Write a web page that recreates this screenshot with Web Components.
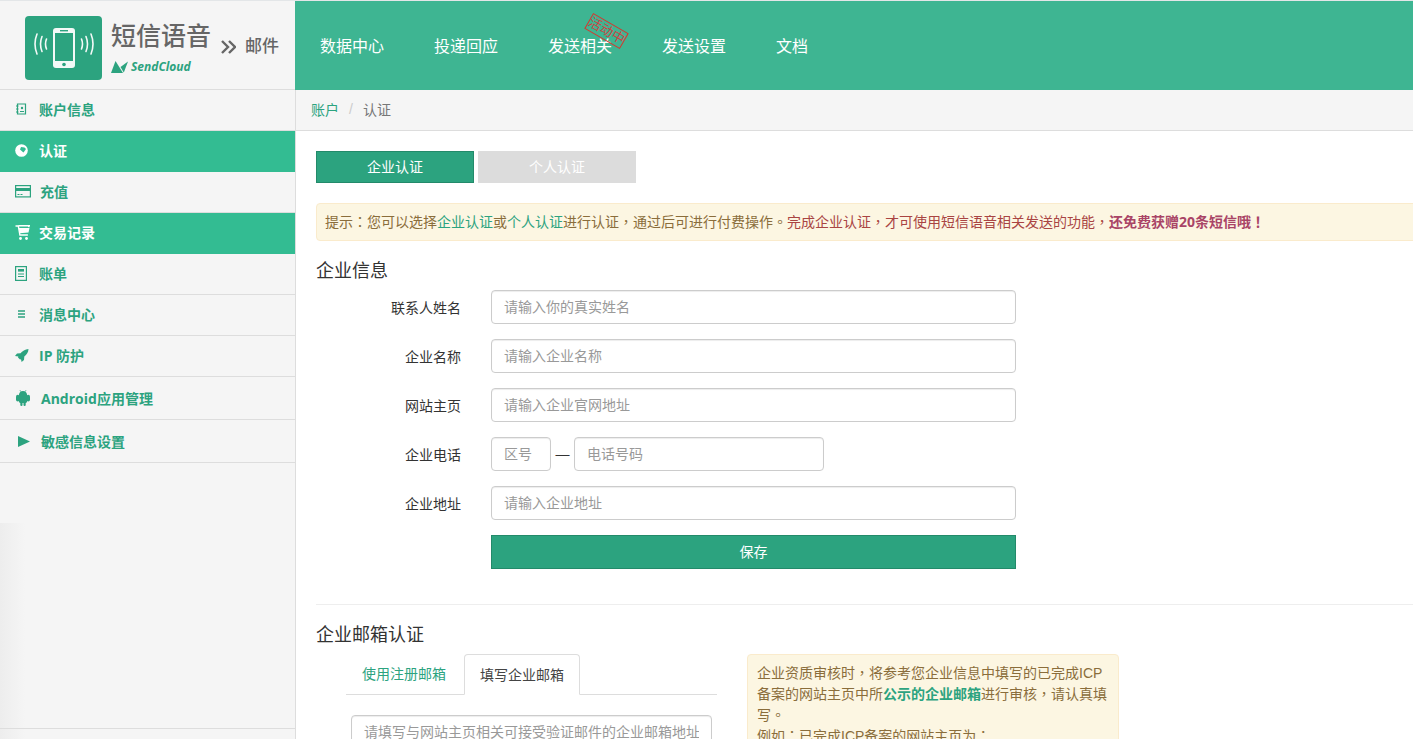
<!DOCTYPE html>
<html lang="zh">
<head>
<meta charset="utf-8">
<title>认证</title>
<style>
    html, body { margin: 0; padding: 0; height: 739px; overflow: hidden; background: #fff; }
    body {
        font-family: "Liberation Sans", "Noto Sans CJK SC", sans-serif;
        font-size: 14px;
        color: #333;
    }
    #page { display: flex; flex-direction: column; width: 1413px; height: 739px; overflow: hidden; }
    #body-row { display: flex; flex: 1; min-height: 0; }
</style>
</head>
<body>
<div id="page">
    <app-header></app-header>
    <div id="body-row">
        <side-nav>
            <nav-item icon="book" label="账户信息"></nav-item>
            <nav-item icon="globe" label="认证" active></nav-item>
            <nav-item icon="card" label="充值" nudge="1"></nav-item>
            <nav-item icon="cart" label="交易记录" active></nav-item>
            <nav-item icon="bill" label="账单"></nav-item>
            <nav-item icon="list" label="消息中心"></nav-item>
            <nav-item icon="rocket" label="IP 防护"></nav-item>
            <nav-item icon="android" label="Android应用管理" nudge="2" tall></nav-item>
            <nav-item icon="play" label="敏感信息设置" nudge="2" tall></nav-item>
        </side-nav>
        <main-panel>
            <bread-crumb></bread-crumb>
            <auth-content></auth-content>
        </main-panel>
    </div>
</div>

<script>
const ICONS = {
    book: '<svg width="12" height="12" viewBox="0 0 12 12"><path d="M2.500 1h8v10h-8z" fill="none" stroke="currentColor" stroke-width="1.200"/><path d="M1 3h2.500M1 6h2.500M1 9h2.500" stroke="currentColor"/><circle cx="7" cy="5" r="1.200" fill="currentColor"/><path d="M5 8.500h4" stroke="currentColor"/></svg>',
    globe: '<svg width="13" height="13" viewBox="0 0 13 13"><circle cx="6.500" cy="6.500" r="6.300" fill="currentColor"/><path d="M6 3l3.500 .5 1.500 1.500-2.500 3.500-1-.8-2.500-2.200z" fill="var(--icon-cut)"/></svg>',
    card: '<svg width="16" height="13" viewBox="0 0 16 13"><rect x=".6" y=".6" width="14.800" height="11.300" fill="none" stroke="currentColor" stroke-width="1.200"/><rect x="1" y="3" width="14" height="3" fill="currentColor"/><path d="M2.500 9.500h2M5.500 9.500h2" stroke="currentColor"/></svg>',
    cart: '<svg width="15" height="15" viewBox="0 0 15 15"><path d="M3.500 .8h10.800l-.8 1.400" fill="none" stroke="currentColor" stroke-width="1.400"/><path d="M.5 1h2.800l1.600 9h8" fill="none" stroke="currentColor" stroke-width="1.400"/><path d="M3.800 3H14.500l-1 4.500-8.800 .8z" fill="currentColor"/><circle cx="5.500" cy="13.500" r="1.400" fill="currentColor"/><circle cx="11.500" cy="13.500" r="1.400" fill="currentColor"/></svg>',
    bill: '<svg width="12" height="15" viewBox="0 0 12 15"><rect x=".6" y=".6" width="10.800" height="13.800" fill="none" stroke="currentColor" stroke-width="1.200"/><rect x="3" y="3" width="6" height="2.600" fill="currentColor"/><path d="M3 8h6M3 10.500h6" stroke="currentColor"/></svg>',
    list: '<svg width="9" height="8" viewBox="0 0 9 8" style="margin-left:3px"><path d="M0 1h7M0 4h7M0 7h7" stroke="currentColor" stroke-width="1.300"/></svg>',
    rocket: '<svg width="14" height="13" viewBox="0 0 14 13"><path d="M13.500 0C10 .3 7.400 2 5.500 4.300L2 4.600 0 7l3.300 .6-.3 1 2 2 1-.3L6.600 13 9 11l.3-3.500C11.700 5.600 13.300 3.500 13.500 0z" fill="currentColor"/></svg>',
    android: '<svg width="14" height="16" viewBox="0 0 14 16" style="margin-left:1px"><path d="M4.800 1.600 4 .2M9.200 1.600 10 .2" stroke="currentColor" stroke-width=".8"/><path d="M7 1C4.500 1 2.800 3 2.800 5.500V11c0 1.400 1 2 2 2h4.400c1 0 2-.6 2-2V5.500C11.200 3 9.500 1 7 1z" fill="currentColor"/><rect x="0" y="4.800" width="3.400" height="6.600" rx="1.700" fill="currentColor"/><rect x="10.600" y="4.800" width="3.400" height="6.600" rx="1.700" fill="currentColor"/><rect x="4.300" y="12" width="2.200" height="4" rx="1" fill="currentColor"/><rect x="7.500" y="12" width="2.200" height="4" rx="1" fill="currentColor"/></svg>',
    play: '<svg width="12" height="11" viewBox="0 0 12 11" style="margin-left:3px"><path d="M0 0l12 5.500L0 11z" fill="currentColor"/></svg>'
};

// centred full-width punctuation, as in the reference
const P = c => `<span class="p" lang="zh-Hant">${c}</span>`;

class AppHeader extends HTMLElement {
    constructor() {
        super();
        this.attachShadow({ mode: 'open' });
        this.shadowRoot.innerHTML = `
        <style>
            :host { display: flex; height: 90px; flex: none; border-top: 1px solid #e3e6e8; box-sizing: border-box; }
            .brand { width: 295px; flex: none; box-sizing: border-box; background: #f5f5f5; border-bottom: 1px solid #ddd;
                display: flex; align-items: flex-start; padding: 15px 0 0 25px; }
            .logo { width: 77px; height: 64px; border-radius: 4px; background: #2ca37f; flex: none; display: flex; align-items: center; justify-content: center; }
            .names { margin-left: 9px; }
            .title { font-size: 25px; line-height: 30px; margin-top: 5px; font-weight: 500; color: #666; white-space: nowrap; }
            .cloud { display: flex; align-items: center; gap: 3px; margin-top: 9px; color: #2ca37f; font: italic bold 12px/14px "Open Sans", "Liberation Sans", sans-serif; }
            .more { display: flex; align-items: center; margin: 21px 0 0 10px; color: #666; font-size: 16px; line-height: 20px; gap: 9px; white-space: nowrap; }
            .more span { font-size: 17px; font-weight: 500; }
            nav { flex: 1; background: #3eb592; display: flex; align-items: center; gap: 50px; padding: 3px 0 0 25px; }
            a { position: relative; color: #fff; font-size: 16px; line-height: 22px; white-space: nowrap; }
            .stamp { position: absolute; left: 38px; top: -14px; width: 41px; height: 18px; box-sizing: border-box; border: 1px solid #d9342c;
                color: #cc4444; font-size: 13px; line-height: 15px; text-align: center; transform: rotate(30deg); white-space: nowrap; overflow: hidden; }
        </style>
        <div class="brand">
            <div class="logo">
                <svg width="60" height="42" viewBox="0 0 60 42" fill="none" stroke="#f3f9f7" stroke-linecap="round">
                    <rect x="19" y="1" width="22" height="40" rx="3" fill="#f3f9f7" stroke="none"/>
                    <rect x="21" y="6" width="18" height="28" fill="#2ca37f" stroke="none"/>
                    <rect x="26" y="3" width="8" height="1.400" fill="#2ca37f" stroke="none"/>
                    <circle cx="30" cy="37.500" r="1.800" fill="#2ca37f" stroke="none"/>
                    <path d="M3 7q-4 10 0 20M8 9.500q-3 7.500 0 15M12.500 12q-2 5 0 10" stroke-width="1.600"/>
                    <path d="M57 7q4 10 0 20M52 9.500q3 7.500 0 15M47.500 12q2 5 0 10" stroke-width="1.600"/>
                </svg>
            </div>
            <div class="names">
                <div class="title">短信语音</div>
                <div class="cloud">
                    <svg width="17" height="12" viewBox="0 0 17 12"><path d="M0 12 4.500 0 12 12z" fill="#2ca37f"/><path d="M17 .5 12.800 11.500 9.500 6z" fill="#2ca37f"/></svg>
                    <span>SendCloud</span>
                </div>
            </div>
            <div class="more">
                <svg width="15" height="14" viewBox="0 0 15 14" fill="none" stroke="#666" stroke-width="2.400"><path d="M1 1l6 6-6 6M8 1l6 6-6 6"/></svg>
                <span>邮件</span>
            </div>
        </div>
        <nav>
            <a>数据中心</a>
            <a>投递回应</a>
            <a>发送相关<span class="stamp">活动中</span></a>
            <a>发送设置</a>
            <a>文档</a>
        </nav>`;
    }
}

class SideNav extends HTMLElement {
    constructor() {
        super();
        this.attachShadow({ mode: 'open' });
        this.shadowRoot.innerHTML = `
        <style>
            :host { display: flex; flex-direction: column; width: 296px; flex: none; box-sizing: border-box;
                background-color: #f5f5f5; border-right: 1px solid #ddd;
                background-image: linear-gradient(90deg, #ededed, #f5f5f5);
                background-size: 25px 216px; background-position: 0 433px; background-repeat: no-repeat; }
            .items { flex: none; }
            .foot { margin-top: auto; height: 10px; border-top: 1px solid #ddd; }
        </style>
        <div class="items"><slot></slot></div>
        <div class="foot"></div>`;
    }
}

class NavItem extends HTMLElement {
    constructor() {
        super();
        this.attachShadow({ mode: 'open' });
    }
    connectedCallback() {
        const icon = ICONS[this.getAttribute('icon')] || '';
        const nudge = Number(this.getAttribute('nudge') || 0);
        this.shadowRoot.innerHTML = `
        <style>
            :host { display: flex; align-items: center; height: 41px; box-sizing: border-box; padding: 0 0 2px 15px;
                border-bottom: 1px solid #ddd; background: transparent; color: #2ca37f; --icon-cut: #f5f5f5; }
            :host([active]) { background: #33bc92; color: #fff; --icon-cut: #33bc92; border-bottom-color: #33bc92; }
            :host([tall]) { height: 43px; padding-bottom: 0; }
            .icon { width: 24px; flex: none; display: flex; align-items: center; justify-content: flex-start; }
            .label { font: 700 14px "Open Sans", "Noto Sans CJK SC", sans-serif; white-space: nowrap; margin-left: ${nudge}px; }
        </style>
        <span class="icon">${icon}</span>
        <span class="label">${this.getAttribute('label')}</span>`;
    }
}

class MainPanel extends HTMLElement {
    constructor() {
        super();
        this.attachShadow({ mode: 'open' });
        this.shadowRoot.innerHTML = `
        <style>
            :host { display: block; flex: 1; min-width: 0; overflow: hidden; background: #fff; }
        </style>
        <slot></slot>`;
    }
}

class BreadCrumb extends HTMLElement {
    constructor() {
        super();
        this.attachShadow({ mode: 'open' });
        this.shadowRoot.innerHTML = `
        <style>
            :host { display: flex; align-items: center; height: 41px; box-sizing: border-box; padding: 0 0 2px 15px;
                background: #f5f5f5; border-bottom: 1px solid #ddd; font-size: 14px; color: #777; }
            a { color: #2ca37f; }
            i { font-style: normal; color: #ccc; margin: 0 10px; }
        </style>
        <a>账户</a><i>/</i><span>认证</span>`;
    }
}

class FormRow extends HTMLElement {
    constructor() {
        super();
        this.attachShadow({ mode: 'open' });
        this.shadowRoot.innerHTML = `
        <style>
            :host { display: flex; align-items: center; height: 34px; margin-bottom: 15px; }
            label { width: 145px; flex: none; text-align: right; font-size: 14px; color: #333; margin-right: 30px; padding-bottom: 1px; white-space: nowrap; }
            .field { display: flex; align-items: center; width: 525px; }
        </style>
        <label></label><div class="field"><slot></slot></div>`;
    }
    connectedCallback() {
        this.shadowRoot.querySelector('label').textContent = this.getAttribute('label') || '';
    }
}

class TextBox extends HTMLElement {
    constructor() {
        super();
        this.attachShadow({ mode: 'open' });
    }
    connectedCallback() {
        const w = this.getAttribute('w') || '100%';
        this.shadowRoot.innerHTML = `
        <style>
            :host { display: block; width: ${w}; flex: none; }
            input { display: block; width: 100%; height: 34px; box-sizing: border-box; padding: 0 12px; border: 1px solid #ccc; border-radius: 4px;
                outline: none; font: 14px "Liberation Sans", "Noto Sans CJK SC", sans-serif; color: #555;
                box-shadow: inset 0 1px 1px rgba(0,0,0,.075); background: #fff; }
            input::placeholder { color: #999; opacity: 1; }
        </style>
        <input type="text" placeholder="${this.getAttribute('hint') || ''}">`;
    }
}

class AuthContent extends HTMLElement {
    constructor() {
        super();
        this.attachShadow({ mode: 'open' });
        this.shadowRoot.innerHTML = `
        <style>
            :host { display: block; padding: 20px 0 0 20px; width: 1140px; }
            .switch { display: flex; gap: 4px; }
            .switch div { width: 158px; height: 32px; box-sizing: border-box; text-align: center; line-height: 30px; font-size: 14px; color: #fff;
                background: #dcdcdc; border: 1px solid #dcdcdc; }
            .switch .on { background: #2ca37f; border-color: #238a6a; }
            .tip { margin-top: 20px; width: 1200px; height: 38px; box-sizing: border-box; padding: 0 8px; line-height: 36px; white-space: nowrap; font-size: 14px;
                background: #fcf6e2; border: 1px solid #faebcc; border-radius: 4px; color: #8a6d3b; }
            .tip a { color: #2ca37f; }
            .tip .red { color: #a94442; }
            .tip b { color: #a94466; font-family: "Open Sans", "Noto Sans CJK SC", sans-serif; }
            .p { font-family: "Noto Sans CJK TC", sans-serif; line-height: 1; }
            h3 { margin: 0; font-size: 18px; line-height: 26px; font-weight: 400; color: #333; }
            .info { margin-top: 6px; }
            .dash { width: 23px; flex: none; text-align: center; color: #333; }
            .save { margin-left: 175px; width: 525px; height: 34px; box-sizing: border-box; background: #2ca37f; border: 1px solid #238a6a;
                color: #fff; text-align: center; line-height: 32px; font-size: 14px; }
            hr { border: 0; border-top: 1px solid #eee; margin: 35px 0 17px; width: 1100px; }
            .mail { display: flex; margin-top: 6px; }
            .mail-left { width: 371px; margin-left: 30px; flex: none; }
            .tabs { display: flex; height: 41px; box-sizing: border-box; border-bottom: 1px solid #ddd; }
            .tabs div { height: 41px; box-sizing: border-box; padding: 0 16px; line-height: 40px; font-size: 14px; color: #2ca37f; white-space: nowrap; }
            .tabs div:first-child { margin-right: 2px; }
            .tabs .on { color: #444; background: #fff; border: 1px solid #ddd; border-bottom-color: #fff; border-radius: 4px 4px 0 0; padding: 0 15px; }
            .mail-input { margin: 20px 0 0 5px; width: 361px; }
            .note { margin-left: 30px; width: 372px; height: 120px; flex: none; box-sizing: border-box; padding: 8px 9px; background: #fcf6e2; border: 1px solid #faebcc; border-radius: 4px;
                color: #8a6d3b; font-size: 14px; line-height: 21px; }
            .note b { color: #2ca37f; }
            .note p { margin: 0; }
        </style>
        <div class="switch"><div class="on">企业认证</div><div>个人认证</div></div>
        <div class="tip">提示${P('：')}您可以选择<a>企业认证</a>或<a>个人认证</a>进行认证${P('，')}通过后可进行付费操作${P('。')}<span class="red">完成企业认证${P('，')}才可使用短信语音相关发送的功能${P('，')}<b>还免费获赠20条短信哦${P('！')}</b></span></div>
        <h3 style="margin-top:17px">企业信息</h3>
        <div class="info">
            <form-row label="联系人姓名"><text-box hint="请输入你的真实姓名"></text-box></form-row>
            <form-row label="企业名称"><text-box hint="请输入企业名称"></text-box></form-row>
            <form-row label="网站主页"><text-box hint="请输入企业官网地址"></text-box></form-row>
            <form-row label="企业电话"><text-box w="60px" hint="区号"></text-box><span class="dash">—</span><text-box w="250px" hint="电话号码"></text-box></form-row>
            <form-row label="企业地址"><text-box hint="请输入企业地址"></text-box></form-row>
        </div>
        <div class="save">保存</div>
        <hr>
        <h3>企业邮箱认证</h3>
        <div class="mail">
            <div class="mail-left">
                <div class="tabs"><div>使用注册邮箱</div><div class="on">填写企业邮箱</div></div>
                <div class="mail-input"><text-box hint="请填写与网站主页相关可接受验证邮件的企业邮箱地址"></text-box></div>
            </div>
            <div class="note">
                <p>企业资质审核时${P('，')}将参考您企业信息中填写的已完成ICP备案的网站主页中所<b>公示的企业邮箱</b>进行审核${P('，')}请认真填写${P('。')}</p>
                <p>例如${P('：')}已完成ICP备案的网站主页为${P('：')}</p>
            </div>
        </div>`;
    }
}

customElements.define('app-header', AppHeader);
customElements.define('side-nav', SideNav);
customElements.define('nav-item', NavItem);
customElements.define('main-panel', MainPanel);
customElements.define('bread-crumb', BreadCrumb);
customElements.define('form-row', FormRow);
customElements.define('text-box', TextBox);
customElements.define('auth-content', AuthContent);
</script>
</body>
</html>
